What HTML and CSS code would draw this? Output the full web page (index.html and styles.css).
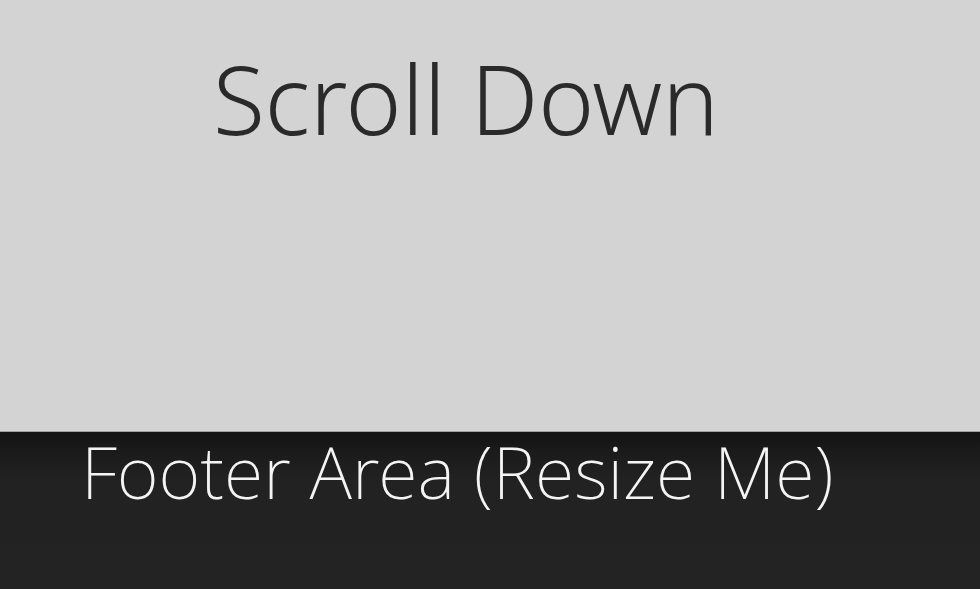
FILE: index.html
```html
<!DOCTYPE html>
<html>
<head>
<meta charset="utf-8">
<link rel="stylesheet" href="styles.css">
</head>
<body>
<main class="content">
  <h1 class="title">Scroll Down</h1>
</main>
<footer class="footer">
  <p class="footer-text">Footer Area (Resize Me)</p>
</footer>
</body>
</html>
```
FILE: styles.css
```css
html, body {
  margin: 0;
  padding: 0;
  height: 100%;
  overflow: hidden;
}
body {
  display: flex;
  flex-direction: column;
  background: #d3d3d3;
  font-family: "Noto Sans", "Open Sans", sans-serif;
}
.content {
  height: 431px;
  flex: none;
  padding: 33px 0 0 213px;
  box-sizing: border-box;
}
.title {
  margin: 0;
  font-size: 95px;
  font-weight: 300;
  line-height: normal;
  color: #2a2a2a;
}
.footer {
  flex: 1;
  background: linear-gradient(to bottom, #121212 0px, #1b1b1b 20px, #222222 50px, #232323 100%);
  border-top: 1px solid #a0a0a0;
  padding: 3px 0 0 81px;
}
.footer-text {
  margin: 0;
  font-size: 72px;
  line-height: 72px;
  font-weight: 200;
  font-stretch: condensed;
  color: #f4f4f4;
}
```
